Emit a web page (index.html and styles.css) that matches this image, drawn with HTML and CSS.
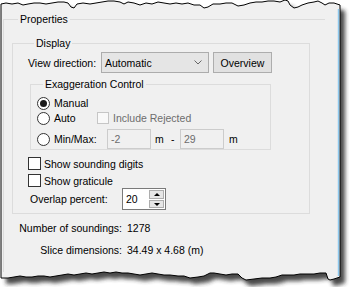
FILE: index.html
```html
<!DOCTYPE html>
<html lang="en">
<head>
    <meta charset="UTF-8">
    <title>Properties</title>
    <link rel="stylesheet" href="styles.css">
</head>
<body>

<div class="sheet">
    <svg class="frame" width="357" height="287" viewBox="0 0 357 287">
        <defs>
            <filter id="soft" x="-10%" y="-10%" width="120%" height="120%">
                <feGaussianBlur stdDeviation="2"/>
            </filter>
            <path id="paper" d="M1,4 L6,3 12,4 18,3 23,5 28,4 34,3 40,3 46,4 52,3 58,2 64,2 68,3 71,7 74,8 77,4 83,3 90,4 96,3 102,2 108,1 114,1 120,2 124,4 128,2 134,3 140,5 146,3 152,4 158,2 164,3 170,4 176,3 182,4 188,3 194,5 200,5 204,8 208,7 213,4 220,4 226,3 232,3 238,6 244,5 250,3 256,2 262,2 268,1 274,1 280,2 285,0 288,1 290,5 294,8 298,7 302,5 308,3 314,2 318,1 322,3 325,5 329,3 334,3 337,4 340,5 L340,277 337,278 334,279 330,280 328,279 326,273 320,273 314,274 306,274 300,274 294,275 288,275 282,275 276,277 270,278 262,278 254,279 246,280 242,278 238,274 232,274 226,275 220,274 214,273 210,273 204,276 198,277 190,278 184,276 178,276 170,275 164,275 158,274 152,273 146,274 140,275 134,274 128,273 122,273 116,272 110,273 104,272 98,273 92,274 86,273 80,274 74,275 68,274 62,275 56,276 50,277 44,276 38,276 32,277 26,277 20,276 14,277 8,278 1,278 Z"/>
        </defs>
        <use href="#paper" transform="translate(5,6)" fill="#2a2a2a" opacity="0.85" filter="url(#soft)"/>
        <use href="#paper" fill="#f0f0f0" stroke="#000" stroke-width="1"/>
        <line x1="338.5" y1="9" x2="338.5" y2="276" stroke="#8ec9ef" stroke-width="1.5"/>
    </svg>

    <div class="panel">
        <fieldset class="group group-props">
            <legend>Properties</legend>

            <fieldset class="group group-display">
                <legend>Display</legend>

                <div class="row-view">
                    <span class="view-label">View direction:</span>
                    <div class="combo">
                        <span>Automatic</span>
                        <svg class="chev" width="8" height="5" viewBox="0 0 8 5"><polyline points="0.5,0.5 4,4 7.5,0.5" fill="none" stroke="#666" stroke-width="1"/></svg>
                    </div>
                    <button class="btn">Overview</button>
                </div>

                <fieldset class="group group-exag">
                    <legend>Exaggeration Control</legend>
                    <div class="opt-row row-manual">
                        <span class="radio checked"></span><span class="opt-text">Manual</span>
                    </div>
                    <div class="opt-row row-auto">
                        <span class="opt"><span class="radio"></span><span class="opt-text">Auto</span></span>
                        <span class="check disabled"></span><span class="dim">Include Rejected</span>
                    </div>
                    <div class="opt-row row-minmax">
                        <span class="opt"><span class="radio"></span><span class="opt-text">Min/Max:</span></span>
                        <span class="field">-2</span><span class="unit">m</span><span class="dash">-</span>
                        <span class="field">29</span><span class="unit">m</span>
                    </div>
                </fieldset>

                <div class="check-row first"><span class="check"></span><span>Show sounding digits</span></div>
                <div class="check-row"><span class="check"></span><span>Show graticule</span></div>

                <div class="row-overlap">
                    <span class="overlap-label">Overlap percent:</span>
                    <div class="spin">
                        <span class="spin-value">20</span>
                        <div class="spin-btns">
                            <span class="spin-btn"><span class="arrow up"></span></span>
                            <span class="spin-btn"><span class="arrow down"></span></span>
                        </div>
                    </div>
                </div>
            </fieldset>

            <div class="info">
                <span class="info-label">Number of soundings:</span><span>1278</span>
                <span class="info-label">Slice dimensions:</span><span>34.49 x 4.68 (m)</span>
            </div>
        </fieldset>
    </div>
</div>

</body>
</html>
```

FILE: styles.css
```css
body {
    margin: 0;
    background: #fff;
    font-family: "Liberation Sans", Arial, sans-serif;
    font-size: 10.5px;
    color: #000;
}
.sheet {
    position: relative;
    width: 357px;
    height: 287px;
    overflow: hidden;
}
.frame { position: absolute; left: 0; top: 0; }
.panel {
    position: relative;
    padding: 13px 0 0 3px;
}
.group {
    margin: 0;
    border: 1px solid #dcdcdc;
    box-sizing: border-box;
    min-inline-size: 0;
}
.group legend {
    margin-left: 6px;
    padding: 0 2px;
    line-height: 13px;
}
.group-props {
    width: 322px;
    height: 259px;
    padding: 11px 0 0 8px;
    border-right: none;
    border-bottom: none;
}
.group-display {
    width: 298px;
    padding: 2px 0 3px 15px;
}
.row-view {
    display: flex;
    align-items: center;
    height: 21px;
}
.view-label { width: 73px; }
.combo {
    width: 108px;
    height: 21px;
    box-sizing: border-box;
    border: 1px solid #acacac;
    background: #e5e5e5;
    display: flex;
    align-items: center;
    justify-content: space-between;
    padding: 0 6px 0 3px;
}
.chev { display: block; }
.btn {
    margin-left: 4px;
    width: 59px;
    height: 21px;
    box-sizing: border-box;
    border: 1px solid #adadad;
    background: #e1e1e1;
    font: inherit;
    color: #000;
    padding: 0;
}
.group-exag {
    width: 241px;
    margin: 5px 0 0 2px;
    padding: 5px 0 0 6px;
}
.opt-row {
    display: flex;
    align-items: center;
}
.row-manual { height: 14px; }
.row-auto { height: 14px; margin-top: 1px; }
.row-minmax { height: 20px; margin-top: 4px; }
.opt { display: flex; align-items: center; width: 60px; }
.row-minmax .opt { width: 70px; }
.radio {
    width: 13px;
    height: 13px;
    box-sizing: border-box;
    border: 1px solid #333;
    border-radius: 50%;
    background: #fff;
    display: flex;
    align-items: center;
    justify-content: center;
    flex-shrink: 0;
}
.radio.checked::after {
    content: "";
    width: 7px;
    height: 7px;
    border-radius: 50%;
    background: #1a1a1a;
}
.opt-text { margin-left: 4px; }
.check {
    width: 13px;
    height: 13px;
    box-sizing: border-box;
    border: 1px solid #333;
    background: #fff;
    flex-shrink: 0;
}
.check.disabled {
    width: 12px;
    height: 12px;
    border-color: #c6c6c6;
    background: #f9f9f9;
}
.dim { color: #6d6d6d; margin-left: 4px; }
.field {
    width: 44px;
    height: 20px;
    box-sizing: border-box;
    border: 1px solid #cccccc;
    background: #f0f0f0;
    color: #6d6d6d;
    padding: 0 3px;
    line-height: 18px;
}
.unit { width: 20px; padding-left: 4px; box-sizing: border-box; }
.row-minmax .unit:last-child { padding-left: 5px; }
.dash { width: 9px; }
.check-row {
    display: flex;
    align-items: center;
    gap: 3px;
    height: 15px;
    margin-top: 2px;
}
.check-row.first { margin-top: 6px; }
.row-overlap {
    display: flex;
    align-items: center;
    height: 22px;
    padding-left: 2px;
}
.overlap-label { width: 92px; }
.spin {
    width: 44px;
    height: 22px;
    box-sizing: border-box;
    border: 1px solid #7a7a7a;
    background: #fff;
    display: flex;
}
.spin-value {
    flex: 1;
    padding-left: 3px;
    line-height: 20px;
}
.spin-btns {
    display: flex;
    flex-direction: column;
    gap: 1px;
    padding: 1px 1px 0 0;
}
.spin-btn {
    width: 15px;
    height: 9px;
    box-sizing: border-box;
    border: 1px solid #adadad;
    background: #e6e6e6;
    display: flex;
    align-items: center;
    justify-content: center;
}
.spin-btn:last-child { height: 8px; }
.arrow {
    width: 0;
    height: 0;
    border-left: 3px solid transparent;
    border-right: 3px solid transparent;
}
.arrow.up { border-bottom: 3px solid #000; }
.arrow.down { border-top: 3px solid #000; }
.info {
    display: grid;
    grid-template-columns: 104px auto;
    column-gap: 5px;
    row-gap: 8px;
    margin-top: 7px;
    padding-left: 6px;
    line-height: 14px;
}
.info-label { justify-self: end; }
```
